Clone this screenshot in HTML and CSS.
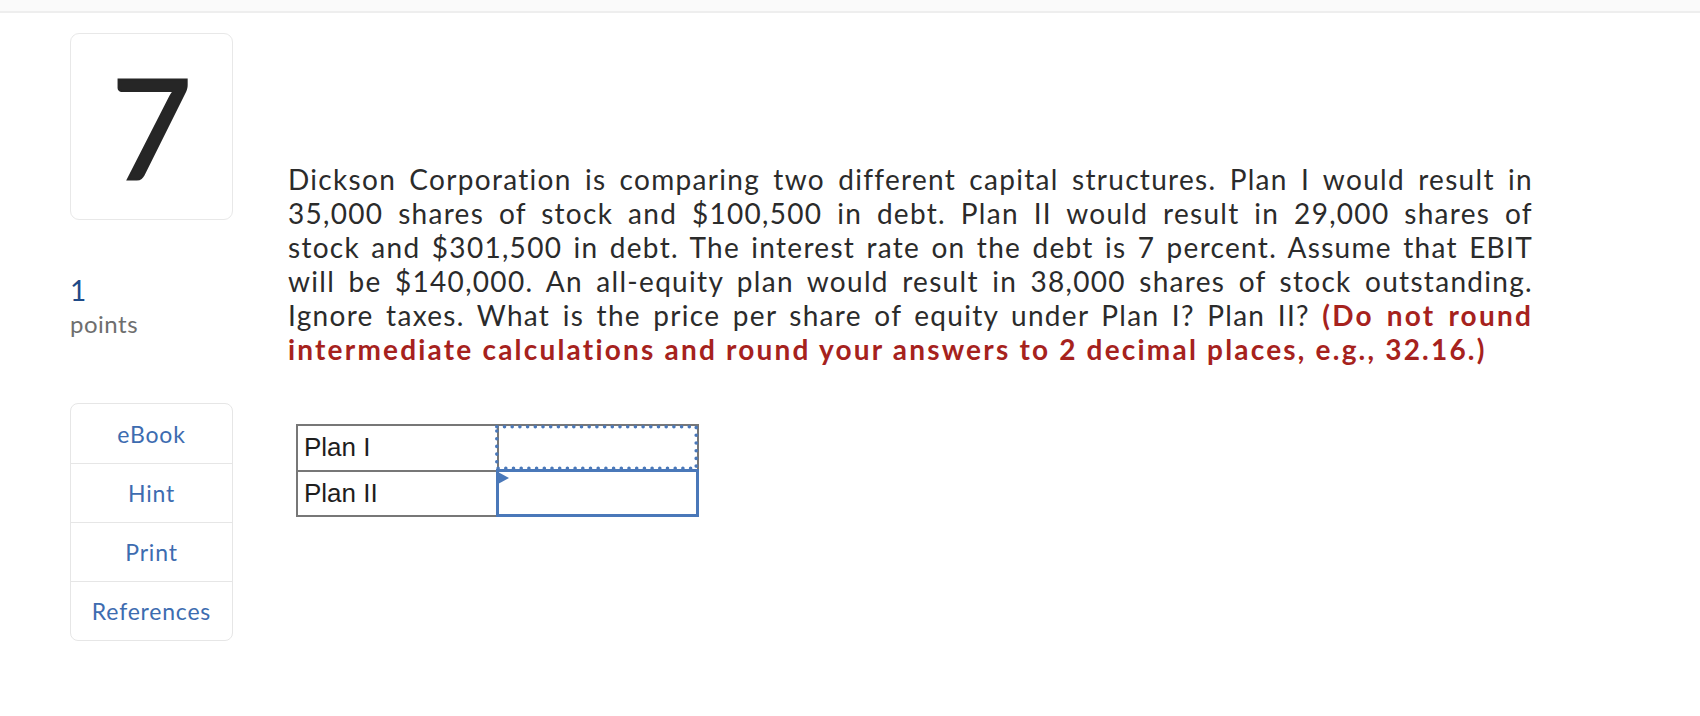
FILE: index.html
```html
<!DOCTYPE html>
<html lang="en">
<head>
<meta charset="utf-8">
<title>Question 7</title>
<link rel="stylesheet" href="styles.css">
</head>
<body>
<div class="topbar"></div>
<div class="page">
  <aside class="side">
    <div class="qnum">7</div>
    <div class="points">
      <div class="pval">1</div>
      <div class="plabel">points</div>
    </div>
    <nav class="tools">
      <a class="tool">eBook</a>
      <a class="tool">Hint</a>
      <a class="tool">Print</a>
      <a class="tool">References</a>
    </nav>
  </aside>
  <main class="content">
    <p class="question">
      <span class="ln">Dickson Corporation is comparing two different capital structures. Plan I would result in</span>
      <span class="ln">35,000 shares of stock and $100,500 in debt. Plan II would result in 29,000 shares of</span>
      <span class="ln">stock and $301,500 in debt. The interest rate on the debt is 7 percent. Assume that EBIT</span>
      <span class="ln">will be $140,000. An all-equity plan would result in 38,000 shares of stock outstanding.</span>
      <span class="ln">Ignore taxes. What is the price per share of equity under Plan I? Plan II? <strong class="note">(Do not round</strong></span>
      <span class="ln last"><strong class="note">intermediate calculations and round your answers to 2 decimal places, e.g., 32.16.)</strong></span>
    </p>
    <table class="answers">
      <tr>
        <td class="label"><div class="cell">Plan I</div></td>
        <td class="entry"><div class="cell focus"><svg class="dots" width="203" height="45" viewBox="0 0 203 45"><rect x="1.8" y="1.8" width="199.4" height="41.4" fill="none" stroke="#4a78b9" stroke-width="3.6" stroke-linecap="round" stroke-dasharray="0 7.7"/></svg></div></td>
      </tr>
      <tr>
        <td class="label"><div class="cell">Plan II</div></td>
        <td class="entry active"><div class="cell marker"></div></td>
      </tr>
    </table>
  </main>
</div>
</body>
</html>
```
FILE: styles.css
```css
html, body {
  margin: 0;
  padding: 0;
  background: #ffffff;
}
body {
  font-family: Lato, "Open Sans", sans-serif;
  color: #2b2b2b;
}
.topbar {
  height: 11px;
  background: #fafafa;
  border-bottom: 2px solid #eeeeee;
}
.page {
  display: flex;
  padding: 20px 0 0 70px;
}
.side {
  width: 163px;
  flex: none;
}
.qnum {
  box-sizing: border-box;
  height: 187px;
  border: 1px solid #e8e8e8;
  border-radius: 9px;
  display: flex;
  align-items: center;
  justify-content: center;
  font-size: 140px;
  font-weight: 400;
  -webkit-text-stroke: 2px #262626;
  line-height: 1;
  color: #262626;
  padding-bottom: 2px;
}
.points {
  margin-top: 54px;
}
.pval {
  font-size: 28px;
  line-height: 32px;
  color: #1f4a87;
}
.plabel {
  font-size: 24px;
  line-height: 32px;
  letter-spacing: 0.5px;
  color: #6e6e6e;
  margin-top: 2px;
}
.tools {
  margin-top: 63px;
  border: 1px solid #e6e6e6;
  border-radius: 8px;
  display: flex;
  flex-direction: column;
}
.tool {
  height: 58px;
  display: flex;
  align-items: center;
  justify-content: center;
  font-size: 23px;
  letter-spacing: 0.8px;
  color: #3d6cb0;
  border-top: 1px solid #e6e6e6;
}
.tool:first-child {
  border-top: none;
  height: 59px;
}
.content {
  margin-left: 55px;
  padding-top: 129px;
}
.question {
  margin: 0;
  width: 1245px;
  font-size: 28px;
  line-height: 34px;
  letter-spacing: 1.3px;
  color: #2b2b2b;
}
.ln {
  display: block;
  white-space: nowrap;
  text-align: justify;
  text-align-last: justify;
}
.ln.last {
  text-align-last: left;
}
.note {
  color: #a6221d;
  font-weight: 700;
  letter-spacing: 2.2px;
}
.answers {
  margin: 58px 0 0 8px;
  border-collapse: collapse;
  font-family: "Liberation Sans", Arial, sans-serif;
}
.answers td {
  border: 2px solid #777777;
  padding: 0;
}
.answers td.active {
  border: 3px solid #4a78b9;
}
.cell {
  box-sizing: border-box;
  width: 198px;
  height: 43px;
  display: flex;
  align-items: center;
  font-size: 26px;
  color: #1e1e1e;
  padding-left: 6px;
  position: relative;
}
.active .cell {
  width: 197px;
  height: 42px;
}
.dots {
  position: absolute;
  left: -4px;
  top: -1px;
}
.marker::before {
  content: "";
  position: absolute;
  left: -1px;
  top: 0;
  border-left: 11px solid #4a78b9;
  border-top: 6.5px solid transparent;
  border-bottom: 6.5px solid transparent;
}
```
